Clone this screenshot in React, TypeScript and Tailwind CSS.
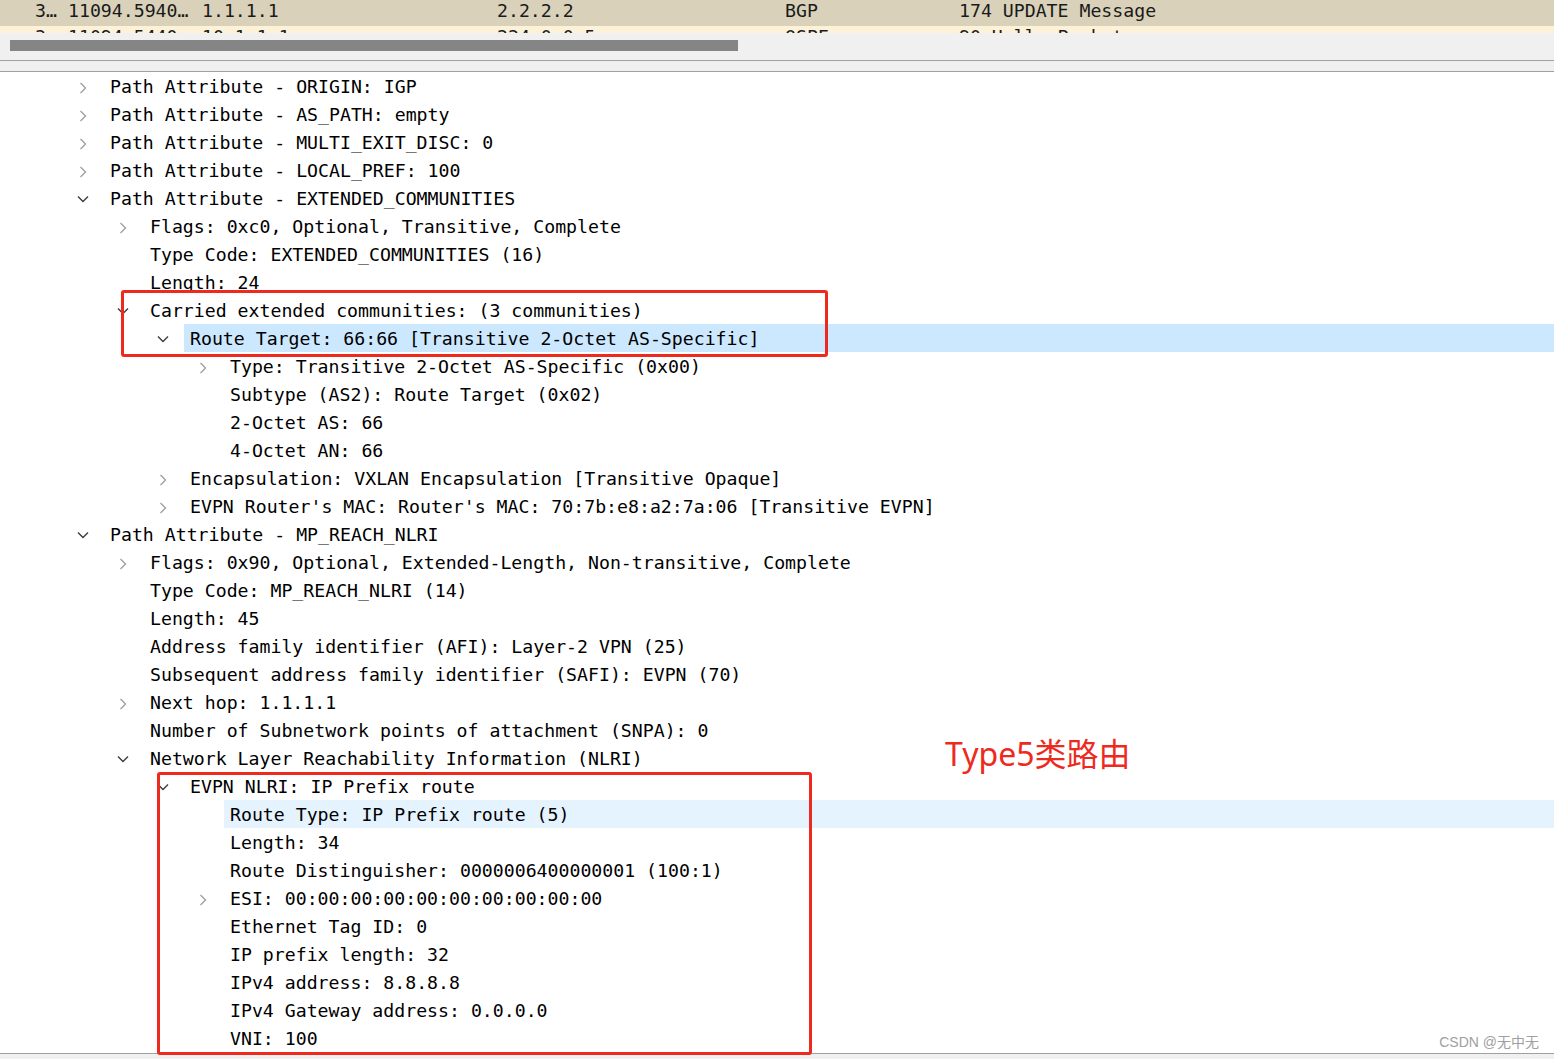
import React from "react";

type Row = { l: number; s: "c" | "e" | "n"; t: string; hl?: "strong" | "light" };

const rows: Row[] = [
  { l: 0, s: "c", t: "Path Attribute - ORIGIN: IGP" },
  { l: 0, s: "c", t: "Path Attribute - AS_PATH: empty" },
  { l: 0, s: "c", t: "Path Attribute - MULTI_EXIT_DISC: 0" },
  { l: 0, s: "c", t: "Path Attribute - LOCAL_PREF: 100" },
  { l: 0, s: "e", t: "Path Attribute - EXTENDED_COMMUNITIES" },
  { l: 1, s: "c", t: "Flags: 0xc0, Optional, Transitive, Complete" },
  { l: 1, s: "n", t: "Type Code: EXTENDED_COMMUNITIES (16)" },
  { l: 1, s: "n", t: "Length: 24" },
  { l: 1, s: "e", t: "Carried extended communities: (3 communities)" },
  { l: 2, s: "e", t: "Route Target: 66:66 [Transitive 2-Octet AS-Specific]", hl: "strong" },
  { l: 3, s: "c", t: "Type: Transitive 2-Octet AS-Specific (0x00)" },
  { l: 3, s: "n", t: "Subtype (AS2): Route Target (0x02)" },
  { l: 3, s: "n", t: "2-Octet AS: 66" },
  { l: 3, s: "n", t: "4-Octet AN: 66" },
  { l: 2, s: "c", t: "Encapsulation: VXLAN Encapsulation [Transitive Opaque]" },
  { l: 2, s: "c", t: "EVPN Router's MAC: Router's MAC: 70:7b:e8:a2:7a:06 [Transitive EVPN]" },
  { l: 0, s: "e", t: "Path Attribute - MP_REACH_NLRI" },
  { l: 1, s: "c", t: "Flags: 0x90, Optional, Extended-Length, Non-transitive, Complete" },
  { l: 1, s: "n", t: "Type Code: MP_REACH_NLRI (14)" },
  { l: 1, s: "n", t: "Length: 45" },
  { l: 1, s: "n", t: "Address family identifier (AFI): Layer-2 VPN (25)" },
  { l: 1, s: "n", t: "Subsequent address family identifier (SAFI): EVPN (70)" },
  { l: 1, s: "c", t: "Next hop: 1.1.1.1" },
  { l: 1, s: "n", t: "Number of Subnetwork points of attachment (SNPA): 0" },
  { l: 1, s: "e", t: "Network Layer Reachability Information (NLRI)" },
  { l: 2, s: "e", t: "EVPN NLRI: IP Prefix route" },
  { l: 3, s: "n", t: "Route Type: IP Prefix route (5)", hl: "light" },
  { l: 3, s: "n", t: "Length: 34" },
  { l: 3, s: "n", t: "Route Distinguisher: 0000006400000001 (100:1)" },
  { l: 3, s: "c", t: "ESI: 00:00:00:00:00:00:00:00:00:00" },
  { l: 3, s: "n", t: "Ethernet Tag ID: 0" },
  { l: 3, s: "n", t: "IP prefix length: 32" },
  { l: 3, s: "n", t: "IPv4 address: 8.8.8.8" },
  { l: 3, s: "n", t: "IPv4 Gateway address: 0.0.0.0" },
  { l: 3, s: "n", t: "VNI: 100" },
];

const mono = "font-['DejaVu_Sans_Mono',monospace] text-[18.2px]";

function Chevron({ s }: { s: Row["s"] }) {
  if (s === "c")
    return (
      <svg width="8" height="12" viewBox="0 0 8 12" className="ml-[9px] mt-[3px]">
        <polyline points="1.5,1 6.5,6 1.5,11" fill="none" stroke="#a0a0a0" strokeWidth="1.4" />
      </svg>
    );
  if (s === "e")
    return (
      <svg width="12" height="8" viewBox="0 0 12 8" className="ml-[7px] mt-[1px]">
        <polyline points="1,1.5 6,6.5 11,1.5" fill="none" stroke="#3c3c3c" strokeWidth="1.4" />
      </svg>
    );
  return null;
}

const indent = ["w-[70px]", "w-[110px]", "w-[150px]", "w-[190px]"];

function TreeRow({ r }: { r: Row }) {
  const bg = r.hl === "strong" ? "bg-[#cce8ff]" : r.hl === "light" ? "bg-[#e5f3ff]" : "";
  return (
    <div className="flex h-[28px] items-stretch">
      <div className={`${indent[r.l]} shrink-0`} />
      <div className="flex w-[34px] shrink-0 items-center">
        <Chevron s={r.s} />
      </div>
      <div className={`flex flex-1 items-center pl-[6px] pt-[2px] whitespace-pre text-black ${bg}`}>{r.t}</div>
    </div>
  );
}

function PacketRow({ cells, cls }: { cells: string[]; cls: string }) {
  const pos = ["w-[33px]", "w-[134px]", "w-[295px]", "w-[288px]", "w-[174px]", "flex-1"];
  return (
    <div className={`flex whitespace-pre leading-[22px] text-[#1a1a1a] ${cls}`}>
      <div className="w-[35px] shrink-0" />
      {cells.map((c, i) => (
        <div key={i} className={`${pos[i]} shrink-0 overflow-hidden`}>
          {c}
        </div>
      ))}
    </div>
  );
}

export default function App() {
  return (
    <div className={`relative h-[1059px] w-[1554px] overflow-hidden bg-white ${mono}`}>
      <div className="h-[33px] overflow-hidden">
        <PacketRow cls="h-[26px] bg-[#d9d1b9]" cells={["3…", "11094.5940…", "1.1.1.1", "2.2.2.2", "BGP", "174 UPDATE Message"]} />
        <PacketRow cls="h-[28px] bg-[#fdf2d8]" cells={["3…", "11094.5440…", "10.1.1.1", "224.0.0.5", "OSPF", "90 Hello Packet"]} />
      </div>
      <div className="h-[27px] bg-[#f0f0f0] pt-[7px] pl-[10px]">
        <div className="h-[11px] w-[728px] bg-[#858585]" />
      </div>
      <div className="h-[1px] bg-[#a0a0a0]" />
      <div className="h-[10px] bg-[#f0f0f0]" />
      <div className="h-[1px] bg-[#a0a0a0]" />
      <div className="h-[981px] overflow-hidden">
        {rows.map((r, i) => (
          <TreeRow key={i} r={r} />
        ))}
      </div>
      <div className="h-[1px] bg-[#a0a0a0]" />
      <div className="h-[10px] bg-[#f0f0f0]" />

      <div className="pointer-events-none absolute left-[121px] top-[290px] h-[67px] w-[707px] rounded-[3px] border-[3px] border-[#ee2a1f]" />
      <div className="pointer-events-none absolute left-[157px] top-[772px] h-[283px] w-[655px] rounded-[3px] border-[3px] border-[#ee2a1f]" />
      <div className="absolute left-[945px] top-[738px] font-['Noto_Sans','Noto_Sans_CJK_SC',sans-serif] text-[32px] leading-none text-[#ee2a1f]">
        Type5类路由
      </div>
      <div className="absolute right-[15px] top-[1035px] font-['Liberation_Sans','Noto_Sans_CJK_SC',sans-serif] text-[14px] leading-none text-[#a0a0a0]">
        CSDN @无中无
      </div>
    </div>
  );
}
